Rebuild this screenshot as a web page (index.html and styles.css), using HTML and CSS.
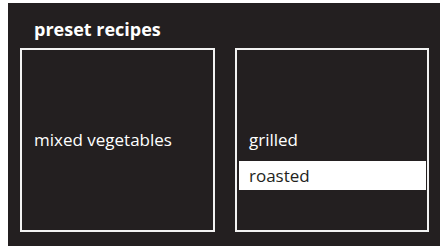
FILE: index.html
```
<!DOCTYPE html>
<html>
<head>
<meta charset="utf-8">
<link rel="stylesheet" href="styles.css">
</head>
<body>
<div class="panel">
  <h1 class="title">preset recipes</h1>
  <div class="boxes">
    <div class="box box-left">
      <div class="item">mixed vegetables</div>
    </div>
    <div class="box box-right">
      <div class="item">grilled</div>
      <div class="item selected">roasted</div>
    </div>
  </div>
</div>
</body>
</html>
```
FILE: styles.css
```
html, body {
  margin: 0;
  padding: 0;
  background: #ffffff;
  width: 440px;
  height: 246px;
  overflow: hidden;
}
.panel {
  margin: 3px 0 0 8px;
  width: 432px;
  height: 243px;
  background: #231f20;
  color: #ffffff;
  font-family: "Open Sans", "DejaVu Sans", sans-serif;
  box-sizing: border-box;
  padding: 0 0 0 12px;
  display: flex;
  flex-direction: column;
}
.title {
  margin: 0;
  padding: 14px 0 0 14px;
  height: 31px;
  font-size: 18px;
  font-weight: 700;
  line-height: 25px;
  letter-spacing: 0;
}
.boxes {
  display: flex;
  gap: 20px;
}
.box {
  border: 2px solid #f2f2f2;
  box-sizing: border-box;
  height: 184px;
}
.box-left {
  width: 195px;
  display: flex;
  align-items: center;
  padding: 0 0 1px 12px;
}
.box-right {
  width: 194px;
  padding: 75px 1px 0 2px;
  display: flex;
  flex-direction: column;
  gap: 7px;
}
.item {
  font-size: 17px;
  line-height: 29px;
}
.box-right .item {
  padding-left: 10px;
}
.selected {
  background: #ffffff;
  color: #231f20;
}
```
